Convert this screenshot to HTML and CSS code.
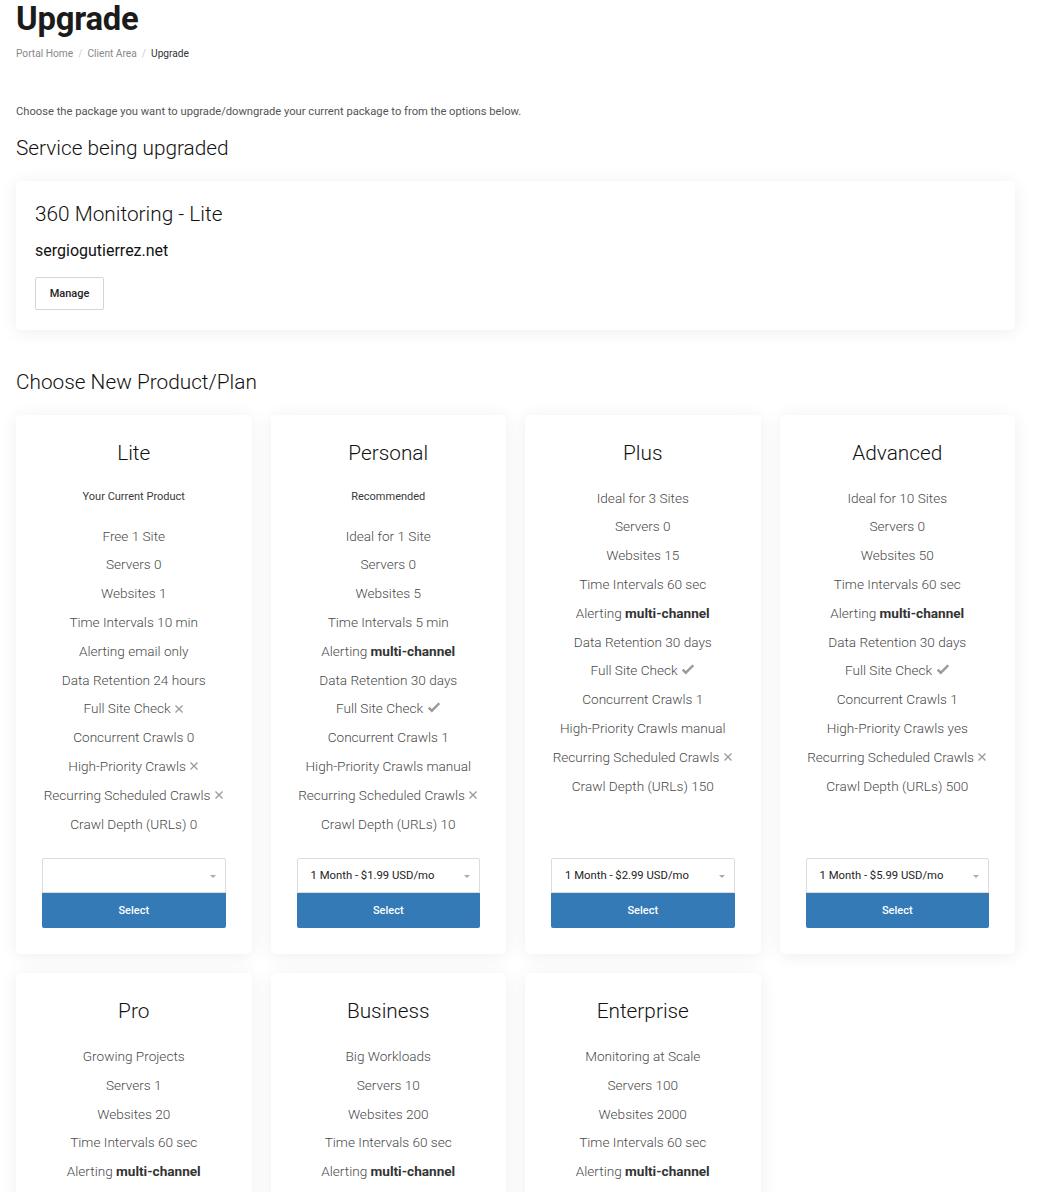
FILE: index.html
```html
<!DOCTYPE html>
<html lang="en">
<head>
<meta charset="utf-8">
<title>Upgrade</title>
<link rel="stylesheet" href="styles.css">
</head>
<body>
<div class="page">
  <h1 class="page-title">Upgrade</h1>
  <nav class="breadcrumb">
    <a href="#">Portal Home</a><span class="sep">/</span><a href="#">Client Area</a><span class="sep">/</span><span class="active">Upgrade</span>
  </nav>
  <p class="intro">Choose the package you want to upgrade/downgrade your current package to from the options below.</p>
  <h2 class="section-title">Service being upgraded</h2>
  <div class="service-card">
    <h3 class="service-name">360 Monitoring - Lite</h3>
    <div class="service-domain">sergiogutierrez.net</div>
    <button class="btn-manage">Manage</button>
  </div>
  <h2 class="section-title plans-title">Choose New Product/Plan</h2>

  <div class="plans">
    <div class="plan">
      <h3 class="plan-name">Lite</h3>
      <div class="plan-sub">Your Current Product</div>
      <ul class="features">
        <li>Free 1 Site</li>
        <li>Servers 0</li>
        <li>Websites 1</li>
        <li>Time Intervals 10 min</li>
        <li>Alerting email only</li>
        <li>Data Retention 24 hours</li>
        <li>Full Site Check <svg class="ico" viewBox="0 0 10 10"><path d="M1.5 1.5 8.5 8.5M8.5 1.5 1.5 8.5"/></svg></li>
        <li>Concurrent Crawls 0</li>
        <li>High-Priority Crawls <svg class="ico" viewBox="0 0 10 10"><path d="M1.5 1.5 8.5 8.5M8.5 1.5 1.5 8.5"/></svg></li>
        <li>Recurring Scheduled Crawls <svg class="ico" viewBox="0 0 10 10"><path d="M1.5 1.5 8.5 8.5M8.5 1.5 1.5 8.5"/></svg></li>
        <li>Crawl Depth (URLs) 0</li>
      </ul>
      <div class="plan-foot">
        <div class="select"><span></span><i class="caret"></i></div>
        <button class="btn-select">Select</button>
      </div>
    </div>

    <div class="plan">
      <h3 class="plan-name">Personal</h3>
      <div class="plan-sub">Recommended</div>
      <ul class="features">
        <li>Ideal for 1 Site</li>
        <li>Servers 0</li>
        <li>Websites 5</li>
        <li>Time Intervals 5 min</li>
        <li>Alerting <b>multi-channel</b></li>
        <li>Data Retention 30 days</li>
        <li>Full Site Check <svg class="chk" viewBox="0 0 14 12"><path d="M0.8 6.4 4.8 10.4 13.2 2 11.4 0.4 4.8 7 2.6 4.8Z"/></svg></li>
        <li>Concurrent Crawls 1</li>
        <li>High-Priority Crawls manual</li>
        <li>Recurring Scheduled Crawls <svg class="ico" viewBox="0 0 10 10"><path d="M1.5 1.5 8.5 8.5M8.5 1.5 1.5 8.5"/></svg></li>
        <li>Crawl Depth (URLs) 10</li>
      </ul>
      <div class="plan-foot">
        <div class="select"><span>1 Month - $1.99 USD/mo</span><i class="caret"></i></div>
        <button class="btn-select">Select</button>
      </div>
    </div>

    <div class="plan">
      <h3 class="plan-name">Plus</h3>
      <ul class="features">
        <li>Ideal for 3 Sites</li>
        <li>Servers 0</li>
        <li>Websites 15</li>
        <li>Time Intervals 60 sec</li>
        <li>Alerting <b>multi-channel</b></li>
        <li>Data Retention 30 days</li>
        <li>Full Site Check <svg class="chk" viewBox="0 0 14 12"><path d="M0.8 6.4 4.8 10.4 13.2 2 11.4 0.4 4.8 7 2.6 4.8Z"/></svg></li>
        <li>Concurrent Crawls 1</li>
        <li>High-Priority Crawls manual</li>
        <li>Recurring Scheduled Crawls <svg class="ico" viewBox="0 0 10 10"><path d="M1.5 1.5 8.5 8.5M8.5 1.5 1.5 8.5"/></svg></li>
        <li>Crawl Depth (URLs) 150</li>
      </ul>
      <div class="plan-foot">
        <div class="select"><span>1 Month - $2.99 USD/mo</span><i class="caret"></i></div>
        <button class="btn-select">Select</button>
      </div>
    </div>

    <div class="plan">
      <h3 class="plan-name">Advanced</h3>
      <ul class="features">
        <li>Ideal for 10 Sites</li>
        <li>Servers 0</li>
        <li>Websites 50</li>
        <li>Time Intervals 60 sec</li>
        <li>Alerting <b>multi-channel</b></li>
        <li>Data Retention 30 days</li>
        <li>Full Site Check <svg class="chk" viewBox="0 0 14 12"><path d="M0.8 6.4 4.8 10.4 13.2 2 11.4 0.4 4.8 7 2.6 4.8Z"/></svg></li>
        <li>Concurrent Crawls 1</li>
        <li>High-Priority Crawls yes</li>
        <li>Recurring Scheduled Crawls <svg class="ico" viewBox="0 0 10 10"><path d="M1.5 1.5 8.5 8.5M8.5 1.5 1.5 8.5"/></svg></li>
        <li>Crawl Depth (URLs) 500</li>
      </ul>
      <div class="plan-foot">
        <div class="select"><span>1 Month - $5.99 USD/mo</span><i class="caret"></i></div>
        <button class="btn-select">Select</button>
      </div>
    </div>

    <div class="plan">
      <h3 class="plan-name">Pro</h3>
      <ul class="features">
        <li>Growing Projects</li>
        <li>Servers 1</li>
        <li>Websites 20</li>
        <li>Time Intervals 60 sec</li>
        <li>Alerting <b>multi-channel</b></li>
        <li>Data Retention 30 days</li>
        <li>Full Site Check <svg class="chk" viewBox="0 0 14 12"><path d="M0.8 6.4 4.8 10.4 13.2 2 11.4 0.4 4.8 7 2.6 4.8Z"/></svg></li>
        <li>Concurrent Crawls 2</li>
        <li>High-Priority Crawls yes</li>
        <li>Recurring Scheduled Crawls <svg class="chk" viewBox="0 0 14 12"><path d="M0.8 6.4 4.8 10.4 13.2 2 11.4 0.4 4.8 7 2.6 4.8Z"/></svg></li>
        <li>Crawl Depth (URLs) 1000</li>
      </ul>
      <div class="plan-foot">
        <div class="select"><span>1 Month - $12.99 USD/mo</span><i class="caret"></i></div>
        <button class="btn-select">Select</button>
      </div>
    </div>

    <div class="plan">
      <h3 class="plan-name">Business</h3>
      <ul class="features">
        <li>Big Workloads</li>
        <li>Servers 10</li>
        <li>Websites 200</li>
        <li>Time Intervals 60 sec</li>
        <li>Alerting <b>multi-channel</b></li>
        <li>Data Retention 30 days</li>
        <li>Full Site Check <svg class="chk" viewBox="0 0 14 12"><path d="M0.8 6.4 4.8 10.4 13.2 2 11.4 0.4 4.8 7 2.6 4.8Z"/></svg></li>
        <li>Concurrent Crawls 5</li>
        <li>High-Priority Crawls yes</li>
        <li>Recurring Scheduled Crawls <svg class="chk" viewBox="0 0 14 12"><path d="M0.8 6.4 4.8 10.4 13.2 2 11.4 0.4 4.8 7 2.6 4.8Z"/></svg></li>
        <li>Crawl Depth (URLs) 5000</li>
      </ul>
      <div class="plan-foot">
        <div class="select"><span>1 Month - $49.99 USD/mo</span><i class="caret"></i></div>
        <button class="btn-select">Select</button>
      </div>
    </div>

    <div class="plan">
      <h3 class="plan-name">Enterprise</h3>
      <ul class="features">
        <li>Monitoring at Scale</li>
        <li>Servers 100</li>
        <li>Websites 2000</li>
        <li>Time Intervals 60 sec</li>
        <li>Alerting <b>multi-channel</b></li>
        <li>Data Retention 30 days</li>
        <li>Full Site Check <svg class="chk" viewBox="0 0 14 12"><path d="M0.8 6.4 4.8 10.4 13.2 2 11.4 0.4 4.8 7 2.6 4.8Z"/></svg></li>
        <li>Concurrent Crawls 10</li>
        <li>High-Priority Crawls yes</li>
        <li>Recurring Scheduled Crawls <svg class="chk" viewBox="0 0 14 12"><path d="M0.8 6.4 4.8 10.4 13.2 2 11.4 0.4 4.8 7 2.6 4.8Z"/></svg></li>
        <li>Crawl Depth (URLs) 10000</li>
      </ul>
      <div class="plan-foot">
        <div class="select"><span>1 Month - $199.99 USD/mo</span><i class="caret"></i></div>
        <button class="btn-select">Select</button>
      </div>
    </div>
  </div>
</div>
</body>
</html>
```

FILE: styles.css
```css
* { box-sizing: border-box; }
html, body { margin: 0; padding: 0; background: #fff; }
body {
  font-family: Roboto, "Liberation Sans", Arial, sans-serif;
  color: #222;
}
.page {
  width: 1015px;
  padding: 0 0 40px 16px;
}
.page-title {
  margin: 0;
  font-size: 32.8px;
  line-height: 38px;
  font-weight: 700;
  color: #1b1b1b;
  letter-spacing: -0.2px;
}
.breadcrumb {
  margin-top: 9px;
  font-size: 10.2px;
  line-height: 14px;
  color: #888;
}
.breadcrumb a { color: #888; text-decoration: none; }
.breadcrumb .sep { color: #ccc; padding: 0 5px; }
.breadcrumb .active { color: #333; }
.intro {
  margin: 44px 0 0;
  font-size: 11.2px;
  line-height: 14px;
  color: #555;
}
.section-title {
  margin: 17px 0 0;
  font-size: 20.8px;
  line-height: 24px;
  font-weight: 300;
  color: #111;
}
.plans-title { margin-top: 40px; }
.service-card {
  margin-top: 21px;
  height: 149px;
  background: #fff;
  border-radius: 5px;
  box-shadow: 0 2px 18px rgba(0,0,0,0.07);
  padding: 22px 19px 20px;
}
.service-name {
  margin: 0;
  font-size: 20.8px;
  line-height: 22px;
  font-weight: 300;
  color: #111;
}
.service-domain {
  margin-top: 17px;
  font-size: 16px;
  line-height: 18px;
  color: #111;
}
.btn-manage {
  margin-top: 17px;
  height: 33px;
  width: 69px;
  background: #fff;
  border: 1px solid #d5d5d5;
  border-radius: 2px;
  font-family: inherit;
  font-size: 11px;
  font-weight: 500;
  color: #222;
  padding: 0;
}
.plans {
  margin-top: 21px;
  display: grid;
  grid-template-columns: repeat(4, 235.5px);
  column-gap: 19px;
  row-gap: 19px;
}
.plan {
  background: #fff;
  border-radius: 5px;
  box-shadow: 0 2px 18px rgba(0,0,0,0.07);
  padding: 27px 26px 26px;
  display: flex;
  flex-direction: column;
  text-align: center;
}
.plan-name {
  margin: 0 0 19.6px;
  font-size: 20.8px;
  line-height: 22px;
  font-weight: 300;
  color: #111;
}
.plan-sub {
  padding: 5px 0 18px;
  font-size: 11px;
  line-height: 15px;
  color: #3a3a3a;
}
.features {
  list-style: none;
  margin: 0;
  padding: 0;
  font-size: 13.6px;
  font-weight: 300;
  color: #4a4a4a;
}
.features li {
  line-height: 28.8px;
  height: 28.8px;
  white-space: nowrap;
}
.features b { font-weight: 700; color: #333; }
.ico {
  width: 10px;
  height: 10px;
  vertical-align: -0.5px;
  fill: none;
  stroke: #999;
  stroke-width: 1.3;
}
.chk {
  width: 14px;
  height: 12px;
  vertical-align: -1px;
  fill: #9a9a9a;
}
.plan-foot {
  margin-top: auto;
  padding-top: 20px;
}
.select {
  height: 35px;
  border: 1px solid #dcdcdc;
  border-radius: 2px 2px 0 0;
  display: flex;
  align-items: center;
  justify-content: space-between;
  padding: 0 9px 0 13px;
  font-size: 11.3px;
  color: #222;
  text-align: left;
}
.caret {
  width: 0;
  height: 0;
  border-left: 3.5px solid transparent;
  border-right: 3.5px solid transparent;
  border-top: 3.5px solid #aaa;
  margin-top: 1px;
}
.btn-select {
  display: block;
  width: 100%;
  height: 35px;
  margin: 0;
  border: 0;
  border-radius: 0 0 2px 2px;
  background: #337ab7;
  color: #fff;
  font-family: inherit;
  font-size: 11px;
  font-weight: 500;
}
```
